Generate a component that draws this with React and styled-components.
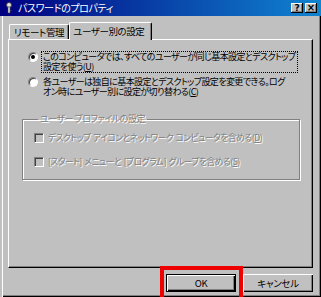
import React from 'react';
import styled, { createGlobalStyle } from 'styled-components';

const GlobalStyle = createGlobalStyle`
  html, body {
    margin: 0;
    padding: 0;
    background: #c0c0c0;
    overflow: hidden;
  }
  body {
    font-family: "Noto Sans CJK JP", "Liberation Sans", sans-serif;
    font-feature-settings: "palt";
  }
`;

const options = [
    {
        lines: ['このコンピュータでは、すべてのユーザーが同じ基本設定とデスクトップ', '設定を使う('],
        key: 'U',
        checked: true,
    },
    {
        lines: ['各ユーザーは独自に基本設定とデスクトップ設定を変更できる。ログ', 'オン時にユーザー別に設定が切り替わる('],
        key: 'C',
        checked: false,
    },
];

const profileItems = [
    { text: 'デスクトップ アイコンとネットワーク コンピュータを含める(', key: 'D' },
    { text: '[スタート] メニューと [プログラム] グループを含める(', key: 'S' },
];

function KeyIcon() {
    return (
        <svg width="8" height="12" viewBox="0 0 8 12">
            <circle cx="4" cy="3" r="2.5" fill="#e8e8e8" stroke="#404040" strokeWidth="1" />
            <rect x="3" y="5" width="2" height="6" fill="#e8e8e8" stroke="#404040" strokeWidth="0.6" />
            <rect x="5" y="8" width="1.5" height="1" fill="#404040" />
        </svg>
    );
}

function App() {
    return (
        <Window>
            <GlobalStyle />
            <TitleBar>
                <TitleLeft>
                    <KeyIcon />
                    <TitleText>パスワードのプロパティ</TitleText>
                </TitleLeft>
                <TitleButtons>
                    <CaptionButton>?</CaptionButton>
                    <CaptionButton $close>×</CaptionButton>
                </TitleButtons>
            </TitleBar>
            <Body>
                <TabRow>
                    <Tab>リモート管理</Tab>
                    <Tab $active>ユーザー別の設定</Tab>
                </TabRow>
                <Panel>
                    <OptionList>
                        {options.map((o, i) => (
                            <OptionRow key={i}>
                                <Radio>{o.checked && <Dot />}</Radio>
                                <OptionLabel $focused={o.checked}>
                                    {o.lines[0]}
                                    <br />
                                    {o.lines[1]}
                                    <u>{o.key}</u>)
                                </OptionLabel>
                            </OptionRow>
                        ))}
                    </OptionList>
                    <Group>
                        <Legend>ユーザー プロファイルの設定</Legend>
                        {profileItems.map((p, i) => (
                            <CheckRow key={i}>
                                <CheckBox />
                                <DisabledText>
                                    {p.text}
                                    <u>{p.key}</u>)
                                </DisabledText>
                            </CheckRow>
                        ))}
                    </Group>
                </Panel>
                <ButtonRow>
                    <Highlighted>
                        <Button $default>OK</Button>
                    </Highlighted>
                    <Button>キャンセル</Button>
                </ButtonRow>
            </Body>
        </Window>
    );
}

const Window = styled.div`
    width: 321px;
    height: 297px;
    box-sizing: border-box;
    background: #c0c0c0;
    display: flex;
    flex-direction: column;
    overflow: hidden;
    box-shadow: inset 2px 0 0 #c0c0c0, inset 3px 0 0 #ffffff,
        inset -1px -1px 0 #000000, inset -2px -2px 0 #808080;
`;

const TitleBar = styled.div`
    height: 16px;
    flex: none;
    display: flex;
    align-items: center;
    justify-content: space-between;
    padding: 0 4px 0 5px;
    background: linear-gradient(to right, #000080, #1084d0);
`;

const TitleLeft = styled.div`
    display: flex;
    align-items: center;
    gap: 5px;
`;

const TitleText = styled.span`
    color: #ffffff;
    font-size: 10px;
    line-height: 16px;
    letter-spacing: -0.4px;
`;

const TitleButtons = styled.div`
    display: flex;
    gap: 2px;
`;

const CaptionButton = styled.div`
    width: 12px;
    height: 10px;
    box-sizing: border-box;
    background: #c0c0c0;
    display: flex;
    align-items: center;
    justify-content: center;
    font-family: "DejaVu Sans", sans-serif;
    font-weight: bold;
    font-size: ${(p) => (p.$close ? '10px' : '9px')};
    line-height: 1;
    color: #000;
    box-shadow: inset -1px -1px 0 #000000, inset 1px 1px 0 #ffffff, inset -2px -2px 0 #808080;
`;

const Body = styled.div`
    flex: 1;
    padding: 6px 8px 0 8px;
    display: flex;
    flex-direction: column;
`;

const TabRow = styled.div`
    display: flex;
    align-items: flex-end;
    padding-left: 1px;
    height: 18px;
    position: relative;
    z-index: 1;
    margin-bottom: -1px;
`;

const Tab = styled.div`
    box-sizing: border-box;
    height: ${(p) => (p.$active ? '18px' : '15px')};
    margin-bottom: ${(p) => (p.$active ? '0' : '1px')};
    padding: ${(p) => (p.$active ? '2px 7px 0 3px' : '1px 4px 0 4px')};
    background: #c0c0c0;
    border-top: 1px solid #ffffff;
    border-left: 1px solid #ffffff;
    border-right: 1px solid #000000;
    border-radius: 2px 2px 0 0;
    box-shadow: inset -1px 0 0 #808080;
    font-size: 9.5px;
    line-height: 12px;
    letter-spacing: -0.4px;
    color: #000;
    white-space: nowrap;
`;

const Panel = styled.div`
    box-sizing: border-box;
    height: 229px;
    flex: none;
    border-top: 1px solid #ffffff;
    border-left: 1px solid #ffffff;
    border-right: 1px solid #000000;
    border-bottom: 1px solid #000000;
    box-shadow: inset -1px -1px 0 #808080;
    padding: 11px 12px 0 13px;
`;

const OptionList = styled.div`
    display: flex;
    flex-direction: column;
    gap: 3px;
    padding-left: 6px;
`;

const OptionRow = styled.div`
    display: flex;
    align-items: flex-start;
    gap: 3px;
`;

const Radio = styled.div`
    width: 10px;
    height: 10px;
    flex: none;
    margin-top: 1px;
    box-sizing: border-box;
    border-radius: 50%;
    background: #ffffff;
    border: 1px solid;
    border-color: #808080 #ffffff #ffffff #808080;
    box-shadow: inset 1px 1px 0 #404040;
    display: flex;
    align-items: center;
    justify-content: center;
`;

const Dot = styled.div`
    width: 4px;
    height: 4px;
    border-radius: 50%;
    background: #000;
`;

const OptionLabel = styled.div`
    font-size: 9px;
    line-height: 10px;
    color: #000;
    letter-spacing: -0.6px;
    white-space: nowrap;
    padding: 0 1px;
    border: 1px dotted ${(p) => (p.$focused ? '#000' : 'transparent')};
    width: 253px;
`;

const Group = styled.fieldset`
    margin: 16px 0 0 0;
    padding: 9px 0 0 11px;
    height: 66px;
    box-sizing: border-box;
    border: 1px solid #808080;
    box-shadow: 1px 1px 0 #ffffff, inset 1px 1px 0 #ffffff;
    display: flex;
    flex-direction: column;
    gap: 14px;
`;

const Legend = styled.legend`
    padding: 0 2px;
    margin-left: 4px;
    font-size: 9px;
    line-height: 10px;
    color: #808080;
    text-shadow: 1px 1px 0 #ffffff;
    letter-spacing: -0.5px;
`;

const CheckRow = styled.div`
    display: flex;
    align-items: center;
    gap: 4px;
`;

const CheckBox = styled.div`
    width: 10px;
    height: 10px;
    box-sizing: border-box;
    flex: none;
    background: #c0c0c0;
    border: 1px solid;
    border-color: #808080 #ffffff #ffffff #808080;
    box-shadow: inset 1px 1px 0 #404040;
`;

const DisabledText = styled.span`
    font-size: 8.75px;
    line-height: 10px;
    color: #808080;
    text-shadow: 1px 1px 0 #ffffff;
    letter-spacing: -0.5px;
    word-spacing: 1px;
    white-space: nowrap;
`;

const ButtonRow = styled.div`
    display: flex;
    justify-content: flex-end;
    gap: 7px;
    margin-top: 6px;
`;

const Highlighted = styled.div`
    position: relative;
    display: flex;

    &::after {
        content: '';
        position: absolute;
        top: -8px;
        left: -6px;
        right: -7px;
        bottom: -12px;
        border: 4px solid #ee0000;
        pointer-events: none;
    }
`;

const Button = styled.div`
    width: 70px;
    height: 18px;
    box-sizing: border-box;
    background: #c0c0c0;
    display: flex;
    align-items: center;
    justify-content: center;
    font-size: 9.5px;
    letter-spacing: -0.3px;
    color: #000;
    border: ${(p) => (p.$default ? '1px solid #000000' : 'none')};
    box-shadow: inset 1px 1px 0 #ffffff, inset -1px -1px 0 #000000, inset -2px -2px 0 #808080;
`;

export default App;
